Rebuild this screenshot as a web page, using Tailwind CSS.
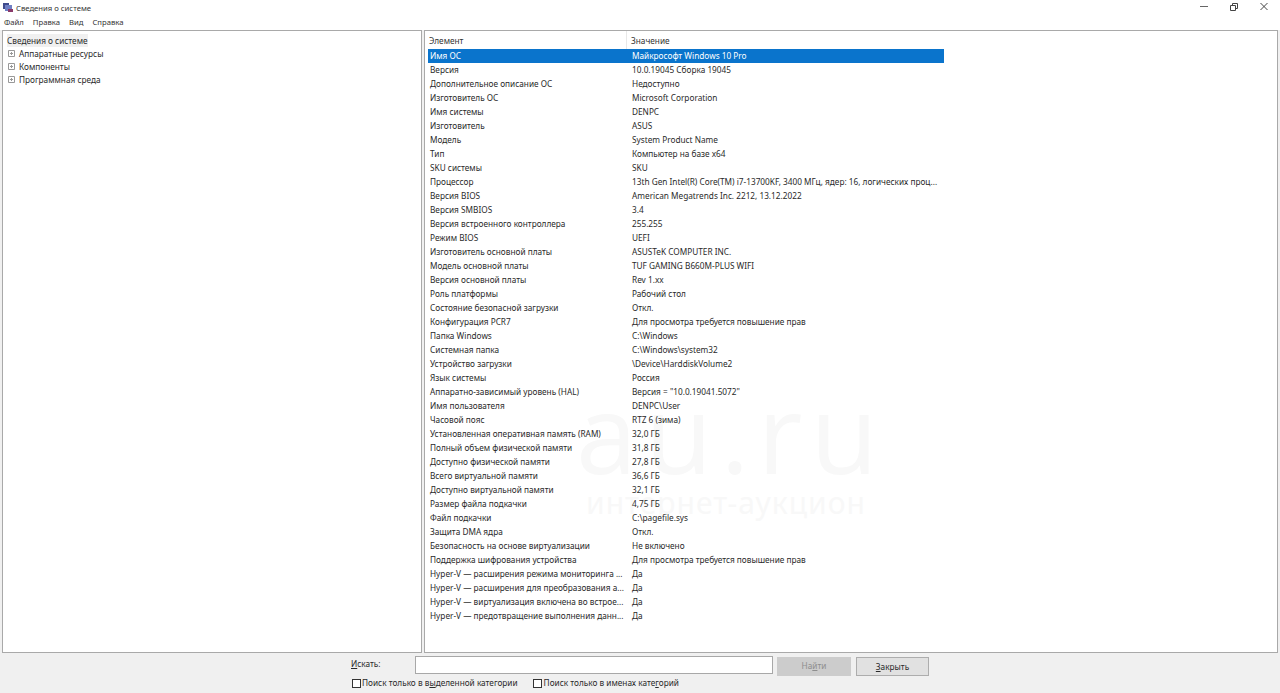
<!DOCTYPE html>
<html lang="ru">
<head>
<meta charset="utf-8">
<script src="https://cdn.jsdelivr.net/npm/@tailwindcss/browser@4"></script>
</head>
<body class="w-[1280px] h-[693px] overflow-hidden bg-[#f0f0f0] font-['Noto_Sans','Open_Sans',sans-serif] text-[8.25px] text-[#2a2a2a] leading-[14px]">
<div class="flex flex-col h-[693px]">
  <header class="bg-white h-[30px] shrink-0 flex flex-col text-[7.7px]">
    <div class="h-[15px] flex items-center pl-[3px]">
      <svg width="10" height="10" viewBox="0 0 10 10" class="mr-[3px]"><rect x="0" y="0" width="6" height="6" fill="#3f4a8c"/><rect x="2" y="2" width="7" height="6" fill="#6f7fc4"/><rect x="5" y="6" width="5" height="3" fill="#8a3a6a"/></svg>
      <span class="text-[#333]">Сведения о системе</span>
      <div class="ml-auto flex items-center h-[15px] gap-[22px] pr-[12px]">
        <svg width="8" height="15" viewBox="0 0 8 15"><path d="M0 6.500H8" stroke="#666" stroke-width="1"/></svg>
        <svg width="8" height="15" viewBox="0 0 8 15"><path d="M.5 5.500h5v5h-5zM2.500 5.500v-2h5v5h-2" fill="none" stroke="#444" stroke-width="1"/></svg>
        <svg width="8" height="15" viewBox="0 0 8 15"><path d="M.5 3l7 7M7.500 3l-7 7" fill="none" stroke="#444" stroke-width="1"/></svg>
      </div>
    </div>
    <nav class="h-[13px] flex items-center pl-[4px] gap-[9px] text-[#333]">
      <span>Файл</span><span>Правка</span><span>Вид</span><span>Справка</span>
    </nav>
  </header>

  <main class="flex h-[623px] shrink-0 px-[2px] gap-[2px]">
    <aside class="w-[420px] border border-[#a9a9a9] bg-white pt-[3px] pl-[4px]">
      <div class="h-[13px] leading-[13px] bg-[#f0f0f0] w-fit">Сведения о системе</div>
      <ul class="[&>li]:flex [&>li]:items-center [&>li]:h-[13px] [&>li]:gap-[4px] pl-[1px]">
        <li><svg width="7" height="7" viewBox="0 0 7 7"><path d="M.5.5h6v6h-6zM2 3.500h3M3.500 2v3" fill="none" stroke="#999" stroke-width="1"/></svg><span>Аппаратные ресурсы</span></li>
        <li><svg width="7" height="7" viewBox="0 0 7 7"><path d="M.5.5h6v6h-6zM2 3.500h3M3.500 2v3" fill="none" stroke="#999" stroke-width="1"/></svg><span>Компоненты</span></li>
        <li><svg width="7" height="7" viewBox="0 0 7 7"><path d="M.5.5h6v6h-6zM2 3.500h3M3.500 2v3" fill="none" stroke="#999" stroke-width="1"/></svg><span>Программная среда</span></li>
      </ul>
    </aside>
    <section class="relative flex-1 border border-[#a9a9a9] bg-white overflow-hidden pl-[3px]">
      <div class="absolute left-[151px] top-[345px] w-[300px] text-center text-[#f8f8f8]">
        <div class="text-[110px] leading-[110px] tracking-[8px] font-['Open_Sans',sans-serif]">au.ru</div>
        <div class="text-[30px] leading-[30px] tracking-[1px] mt-[2px]">интернет-аукцион</div>
      </div>
      <div class="relative flex h-[18px] text-[#333]">
        <span class="w-[199px] pl-[1px] border-r border-[#e8e8e8] leading-[19px]">Элемент</span>
        <span class="pl-[4px] leading-[19px]">Значение</span>
      </div>
      <div class="relative w-[516px] [&>div]:flex [&>div]:h-[14px] [&>div]:leading-[14px] [&>div>span]:whitespace-nowrap [&>div>span:first-child]:w-[204px] [&>div>span:first-child]:shrink-0 [&>div>span:first-child]:pl-[2px]">
        <div class="bg-[#0a74cc] text-white"><span>Имя ОС</span><span>Майкрософт Windows 10 Pro</span></div>
        <div><span>Версия</span><span>10.0.19045 Сборка 19045</span></div>
        <div><span>Дополнительное описание ОС</span><span>Недоступно</span></div>
        <div><span>Изготовитель ОС</span><span>Microsoft Corporation</span></div>
        <div><span>Имя системы</span><span>DENPC</span></div>
        <div><span>Изготовитель</span><span>ASUS</span></div>
        <div><span>Модель</span><span>System Product Name</span></div>
        <div><span>Тип</span><span>Компьютер на базе x64</span></div>
        <div><span>SKU системы</span><span>SKU</span></div>
        <div><span>Процессор</span><span>13th Gen Intel(R) Core(TM) i7-13700KF, 3400 МГц, ядер: 16, логических проц...</span></div>
        <div><span>Версия BIOS</span><span>American Megatrends Inc. 2212, 13.12.2022</span></div>
        <div><span>Версия SMBIOS</span><span>3.4</span></div>
        <div><span>Версия встроенного контроллера</span><span>255.255</span></div>
        <div><span>Режим BIOS</span><span>UEFI</span></div>
        <div><span>Изготовитель основной платы</span><span>ASUSTeK COMPUTER INC.</span></div>
        <div><span>Модель основной платы</span><span>TUF GAMING B660M-PLUS WIFI</span></div>
        <div><span>Версия основной платы</span><span>Rev 1.xx</span></div>
        <div><span>Роль платформы</span><span>Рабочий стол</span></div>
        <div><span>Состояние безопасной загрузки</span><span>Откл.</span></div>
        <div><span>Конфигурация PCR7</span><span>Для просмотра требуется повышение прав</span></div>
        <div><span>Папка Windows</span><span>C:\Windows</span></div>
        <div><span>Системная папка</span><span>C:\Windows\system32</span></div>
        <div><span>Устройство загрузки</span><span>\Device\HarddiskVolume2</span></div>
        <div><span>Язык системы</span><span>Россия</span></div>
        <div><span>Аппаратно-зависимый уровень (HAL)</span><span>Версия = "10.0.19041.5072"</span></div>
        <div><span>Имя пользователя</span><span>DENPC\User</span></div>
        <div><span>Часовой пояс</span><span>RTZ 6 (зима)</span></div>
        <div><span>Установленная оперативная память (RAM)</span><span>32,0 ГБ</span></div>
        <div><span>Полный объем физической памяти</span><span>31,8 ГБ</span></div>
        <div><span>Доступно физической памяти</span><span>27,8 ГБ</span></div>
        <div><span>Всего виртуальной памяти</span><span>36,6 ГБ</span></div>
        <div><span>Доступно виртуальной памяти</span><span>32,1 ГБ</span></div>
        <div><span>Размер файла подкачки</span><span>4,75 ГБ</span></div>
        <div><span>Файл подкачки</span><span>C:\pagefile.sys</span></div>
        <div><span>Защита DMA ядра</span><span>Откл.</span></div>
        <div><span>Безопасность на основе виртуализации</span><span>Не включено</span></div>
        <div><span>Поддержка шифрования устройства</span><span>Для просмотра требуется повышение прав</span></div>
        <div><span>Hyper-V — расширения режима мониторинга ...</span><span>Да</span></div>
        <div><span>Hyper-V — расширения для преобразования а...</span><span>Да</span></div>
        <div><span>Hyper-V — виртуализация включена во встрое...</span><span>Да</span></div>
        <div><span>Hyper-V — предотвращение выполнения данн...</span><span>Да</span></div>
      </div>
    </section>
  </main>

  <footer class="flex-1 flex flex-col items-start pl-[351px] pt-[3px]">
    <div class="flex items-start h-[20px] w-full">
      <span class="w-[64px] mt-[1px]"><span class="underline">И</span>скать:</span>
      <div class="w-[358px] h-[18px] bg-white border border-[#a8a8a8]"></div>
      <div class="ml-[4px] mt-[1px] w-[74px] h-[19px] leading-[18px] bg-[#cccccc] text-[#8e8e8e] text-center">На<span class="underline">й</span>ти</div>
      <div class="ml-[5px] mt-[1px] w-[73px] h-[19px] leading-[17px] bg-[#e1e1e1] border border-[#adadad] text-center"><span class="underline">З</span>акрыть</div>
    </div>
    <div class="flex items-center h-[14px] ml-[1px]">
      <span class="w-[9px] h-[9px] border border-[#333] bg-white mr-[1px]"></span>
      <span>Поиск только в в<span class="underline">ы</span>деленной категории</span>
      <span class="w-[9px] h-[9px] border border-[#333] bg-white ml-[15px] mr-[2px]"></span>
      <span>Поиск только в именах кате<span class="underline">г</span>орий</span>
    </div>
  </footer>
</div>
</body>
</html>
